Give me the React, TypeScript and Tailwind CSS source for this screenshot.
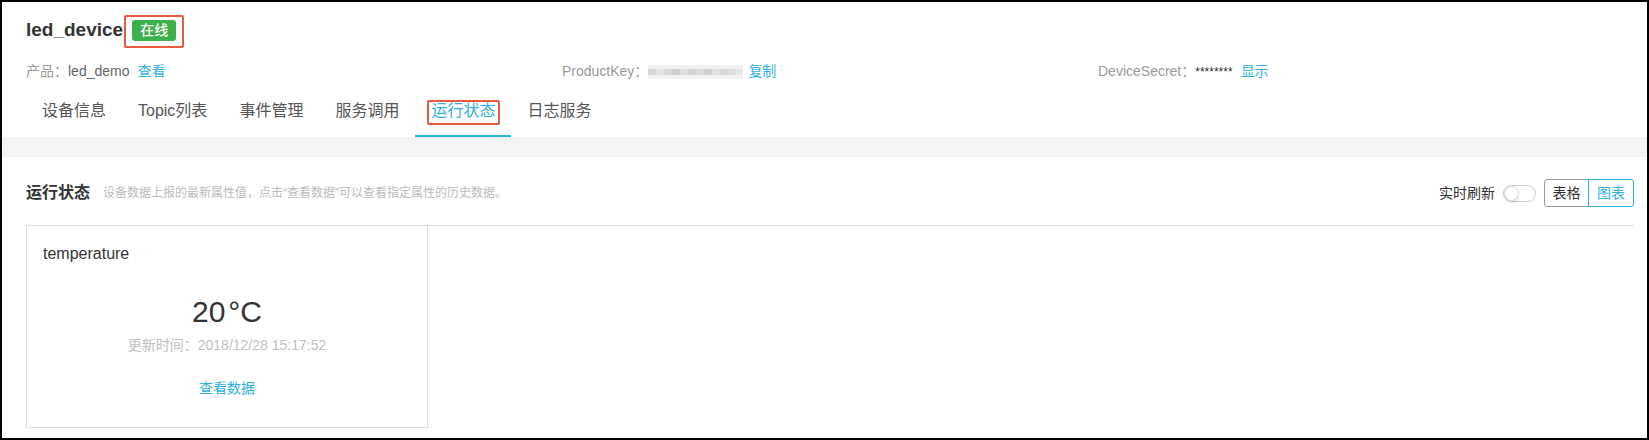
import React from "react";

// --- DATA ---
const tabs = ["设备信息", "Topic列表", "事件管理", "服务调用", "运行状态", "日志服务"];
const activeTab = "运行状态";

const blurBlocks = ["#d6d6d6", "#e4e4e4", "#d9d9d9", "#cfcfcf", "#e0e0e0", "#d3d3d3", "#dcdcdc", "#d0d0d0", "#e2e2e2", "#d8d8d8", "#dedede", "#e8e8e8"];

const DeviceStatus: React.FC = () => {
    return (
        <div className="w-[1649px] h-[440px] overflow-hidden border-2 border-black bg-white font-['Liberation_Sans','Noto_Sans_CJK_SC',sans-serif]">
            {/* --- HEADER --- */}
            <div className="pl-6 pr-[13px]">
                {/* Title */}
                <div className="mt-[10px] flex h-[36px] items-center">
                    <span className="text-[19px] font-bold text-[#333]">led_device</span>
                    <span className="relative ml-[9px] inline-flex">
                        <span className="flex h-[21px] items-center rounded-[3px] bg-[#3cb04a] px-2 text-[14px] font-medium text-white">
                            在线
                        </span>
                        <span className="absolute -left-2 -right-2 -top-[5px] -bottom-[7px] rounded-[2px] border-2 border-[#ea5a3d]" />
                    </span>
                </div>

                {/* Meta */}
                <div className="mt-[13px] grid h-[20px] grid-cols-3 items-center text-[14px]">
                    <div className="flex items-center">
                        <span className="text-[#999]">产品：</span>
                        <span className="text-[#666]">led_demo</span>
                        <span className="ml-2 text-[#2fb2e2]">查看</span>
                    </div>
                    <div className="flex items-center">
                        <span className="text-[#999]">ProductKey：</span>
                        <span className="flex h-[14px] w-[95px] flex-col">
                            <span className="h-[4px] bg-[#f1f1f1]" />
                            <span className="flex h-[6px]">
                                {blurBlocks.map((c, i) => (
                                    <span key={i} className="h-full flex-1" style={{ backgroundColor: c }} />
                                ))}
                            </span>
                            <span className="h-[4px] bg-[#f3f3f3]" />
                        </span>
                        <span className="ml-[5px] text-[#2fb2e2]">复制</span>
                    </div>
                    <div className="flex items-center">
                        <span className="text-[#999]">DeviceSecret：</span>
                        <span className="text-[12px] text-[#333]">********</span>
                        <span className="ml-2 text-[#2fb2e2]">显示</span>
                    </div>
                </div>

                {/* Tabs */}
                <div className="mt-[6px] flex">
                    {tabs.map((t) => {
                        const active = t === activeTab;
                        return (
                            <div
                                key={t}
                                className={
                                    active
                                        ? "flex h-[50px] items-center border-b-2 border-[#2fb2e2] px-4 text-[16px] text-[#2fb2e2]"
                                        : "flex h-[50px] items-center border-b-2 border-transparent px-4 text-[16px] text-[#555]"
                                }
                            >
                                <span className="relative leading-6">
                                    {t}
                                    {active && (
                                        <span className="absolute -left-1 -right-[5px] top-px -bottom-0.5 rounded-[2px] border-2 border-[#ea5a3d]" />
                                    )}
                                </span>
                            </div>
                        );
                    })}
                </div>
            </div>

            {/* Gray band */}
            <div className="h-5 bg-[#f4f4f4]" />

            {/* --- STATUS SECTION --- */}
            <div className="pl-6 pr-[13px] pt-[22px]">
                <div className="flex h-[28px] items-center justify-between">
                    <div className="flex items-center">
                        <span className="text-[16px] font-semibold text-[#333]">运行状态</span>
                        <span className="ml-[13px] text-[12px] text-[#bbb]">
                            设备数据上报的最新属性值，点击“查看数据”可以查看指定属性的历史数据。
                        </span>
                    </div>
                    <div className="flex items-center">
                        <span className="text-[14px] text-[#333]">实时刷新</span>
                        <span className="ml-2 flex h-[17px] w-[33px] items-center rounded-full border border-[#ccc] bg-white">
                            <span className="h-[15px] w-[15px] rounded-full border border-[#ddd] bg-white shadow-sm" />
                        </span>
                        <div className="ml-2 flex">
                            <span className="flex h-[28px] w-[45px] items-center justify-center rounded-l-[3px] border border-[#999] text-[14px] text-[#333]">
                                表格
                            </span>
                            <span className="-ml-px flex h-[28px] w-[46px] items-center justify-center rounded-r-[3px] border border-[#2fb2e2] text-[14px] text-[#2fb2e2]">
                                图表
                            </span>
                        </div>
                    </div>
                </div>

                {/* Cards */}
                <div className="mt-[18px] border-t border-[#ddd]">
                    <div className="flex h-[202px] w-[402px] flex-col border-x border-b border-[#ddd] px-4 pt-4">
                        <div className="text-[16px] leading-6 text-[#333]">temperature</div>
                        <div className="mt-[28px] text-center text-[30px] leading-9 text-[#333]">
                            20<span className="ml-[3px]">°C</span>
                        </div>
                        <div className="mt-[5px] text-center text-[14px] leading-5 text-[#bfbfbf]">
                            更新时间：2018/12/28 15:17:52
                        </div>
                        <div className="mt-[23px] text-center text-[14px] leading-5 text-[#2fb2e2]">查看数据</div>
                    </div>
                </div>
            </div>
        </div>
    );
};

export default DeviceStatus;
